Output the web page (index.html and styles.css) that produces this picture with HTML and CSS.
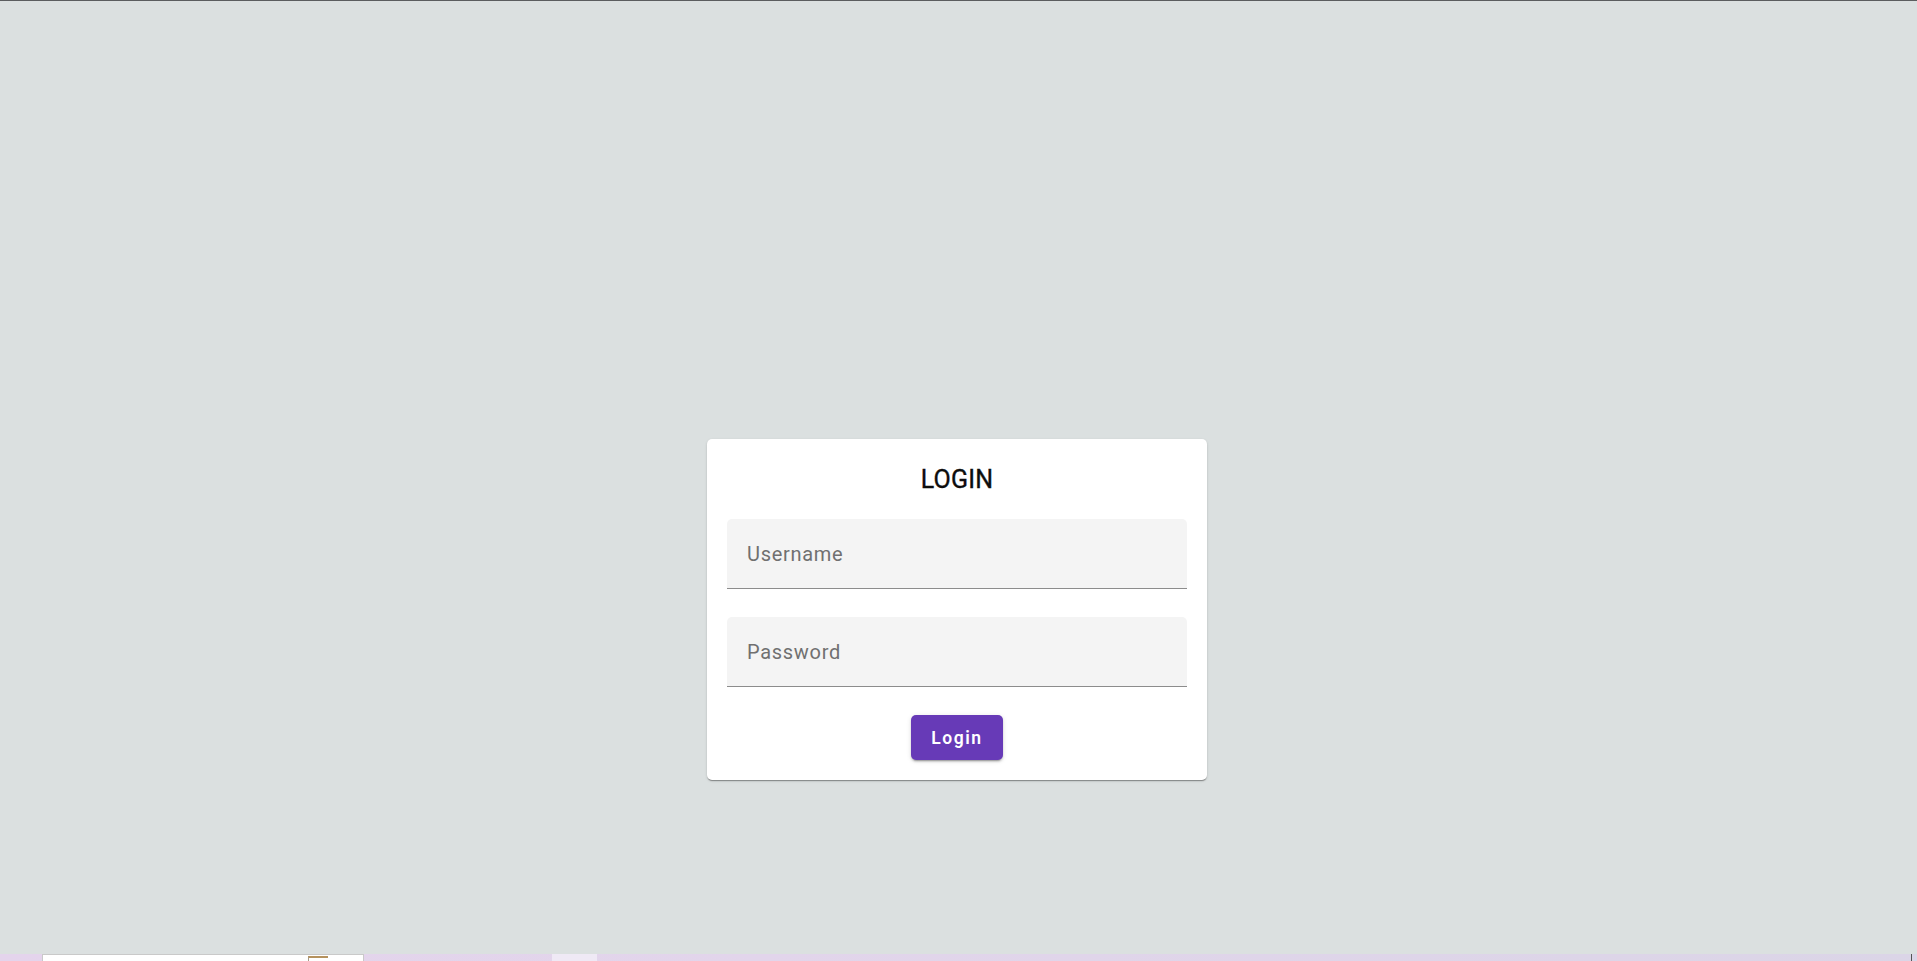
FILE: index.html
```html
<!DOCTYPE html>
<html lang="en">
<head>
<meta charset="utf-8">
<title>Login</title>
<link rel="stylesheet" href="styles.css">
</head>
<body>
<div class="page">
  <main class="stage">
    <form class="card">
      <h1 class="title">LOGIN</h1>
      <div class="field"><input class="field-input" type="text" placeholder="Username"></div>
      <div class="field field-second"><input class="field-input" type="password" placeholder="Password"></div>
      <div class="actions"><button class="btn" type="button">Login</button></div>
    </form>
  </main>
  <footer class="taskbar">
    <div class="task-window"><span class="task-icon"></span></div>
    <div class="task-tab"></div>
    <div class="task-edge"></div>
  </footer>
</div>
</body>
</html>
```
FILE: styles.css
```css
html, body {
  margin: 0;
  padding: 0;
  height: 100%;
}
body {
  background: #dbe0e0;
  font-family: Roboto, "Noto Sans", "Liberation Sans", sans-serif;
  overflow: hidden;
}
.page {
  height: 961px;
  display: flex;
  flex-direction: column;
  border-top: 1px solid #5b5d5f;
  box-sizing: border-box;
}
.stage {
  flex: 1;
  display: flex;
  justify-content: center;
  align-items: flex-start;
  padding-top: 438px;
  padding-right: 3px;
  box-sizing: border-box;
}
.card {
  width: 500px;
  box-sizing: border-box;
  background: #fff;
  border-radius: 5px;
  padding: 20px;
  box-shadow: 0 2px 1px -1px rgba(0,0,0,.22), 0 1px 1px 0 rgba(0,0,0,.16), 0 1px 3px 0 rgba(0,0,0,.12);
}
.title {
  margin: 0;
  font-size: 25px;
  line-height: 40px;
  font-weight: 400;
  text-align: center;
  color: #0d0d0d;
  letter-spacing: 0.2px;
  padding-top: 1px;
  margin-bottom: -1px;
  -webkit-text-stroke: 0.35px #0d0d0d;
}
.field {
  margin-top: 20px;
  height: 70px;
  box-sizing: border-box;
  background: #f4f4f4;
  border-radius: 5px 5px 0 0;
  border-bottom: 1px solid #8c8c8c;
  display: flex;
}
.field-second {
  margin-top: 28px;
}
.field-input {
  flex: 1;
  min-width: 0;
  border: none;
  outline: none;
  background: transparent;
  padding: 0 20px;
  font-family: Roboto, "Noto Sans", "Liberation Sans", sans-serif;
  font-size: 20px;
  letter-spacing: 0.7px;
  color: #212121;
}
.field-input::placeholder {
  color: #707070;
  opacity: 1;
}
.actions {
  margin-top: 28px;
  display: flex;
  justify-content: center;
}
.btn {
  height: 45px;
  padding: 0 20px;
  min-width: 92px;
  border: none;
  border-radius: 5px;
  background: #673ab7;
  color: #fff;
  font-family: Roboto, "Noto Sans", "Liberation Sans", sans-serif;
  font-size: 17.5px;
  font-weight: 600;
  letter-spacing: 1.56px;
  box-shadow: 0 3px 1px -2px rgba(0,0,0,.2), 0 2px 2px 0 rgba(0,0,0,.14), 0 1px 5px 0 rgba(0,0,0,.12);
  cursor: pointer;
}
.taskbar {
  height: 7px;
  flex: none;
  display: flex;
  align-items: stretch;
  padding-left: 42px;
  padding-right: 5px;
  background: linear-gradient(90deg, #e4d4ec 0%, #e2d5eb 40%, #dbd5e7 100%);
}
.task-window {
  width: 322px;
  box-sizing: border-box;
  background: #fff;
  border: 1px solid #c9c9c9;
  border-bottom: none;
  position: relative;
}
.task-icon {
  position: absolute;
  left: 265px;
  top: 1px;
  width: 20px;
  height: 6px;
  box-sizing: border-box;
  border-left: 1px solid #a89a88;
  border-top: 2px solid #b5925e;
}
.task-tab {
  width: 45px;
  margin-left: 188px;
  background: #efe9f5;
}
.task-edge {
  width: 1px;
  margin-left: auto;
  background: #555;
}
```
